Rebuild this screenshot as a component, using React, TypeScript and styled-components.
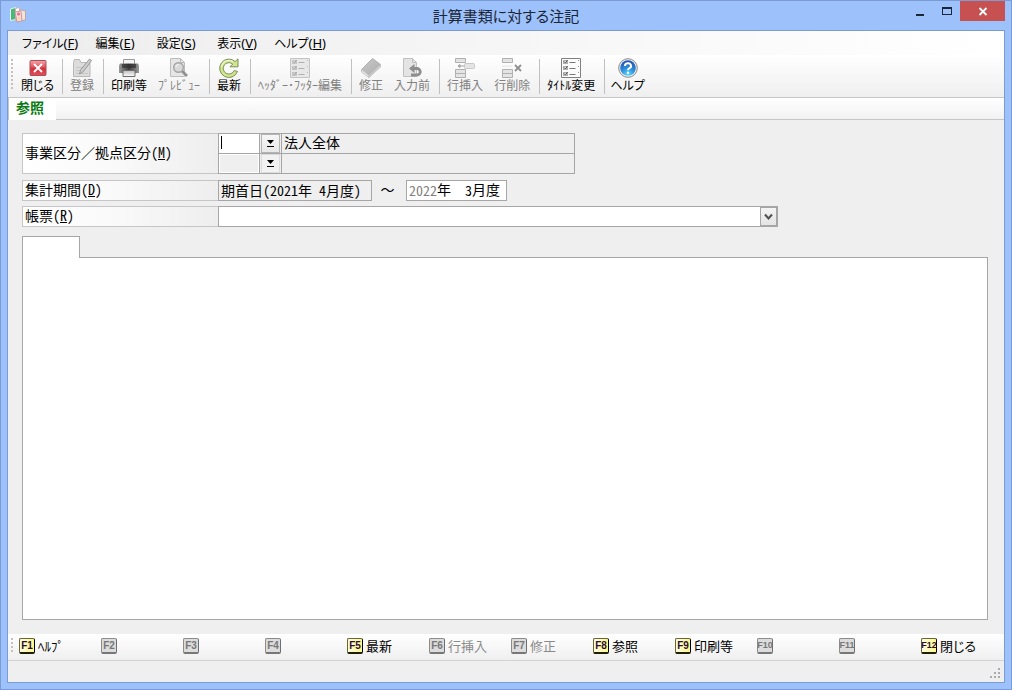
import React from "react";
import styled, { createGlobalStyle, css } from "styled-components";

const frame = "#9dc1fa";
const frameLine = "#7b9bd2";
const line = "#a6a6a6";
const softLine = "#c6c6c6";
const face = "#efefef";

const GlobalStyle = createGlobalStyle`
  * { box-sizing: border-box; }
  body { margin: 0; }
  body, button, input, select {
    font-family: "Noto Sans CJK JP", "Noto Sans", sans-serif;
    color: #000;
  }
  button, input, select { margin: 0; border-radius: 0; }
`;

const Window = styled.div`
  min-height: 100vh;
  display: flex;
  flex-direction: column;
  background: ${frame};
  border: 1px solid ${frameLine};
  padding: 0 6px 6px;
`;

const TitleBar = styled.header`
  height: 29px;
  display: grid;
  grid-template-columns: 1fr auto 1fr;
  align-items: start;
`;

const AppIcon = styled.svg`
  width: 18px;
  height: 18px;
  margin: 5px 0 0 2px;
`;

const Title = styled.h1`
  margin: 3px 0 0;
  font-size: 15px;
  line-height: 24px;
  font-weight: 400;
  font-feature-settings: "palt";
  color: #1b2638;
`;

const WindowButtons = styled.div`
  display: flex;
  justify-content: flex-end;
`;

const WindowButton = styled.button<{ $close?: boolean }>`
  width: ${(p) => (p.$close ? "45px" : "27px")};
  height: 20px;
  padding: 0;
  border: 0;
  background: ${(p) => (p.$close ? "#c75050" : "transparent")};
  svg { display: block; margin: 0 auto; }
`;

const Client = styled.div`
  flex: 1;
  display: flex;
  flex-direction: column;
  background: ${face};
  border: 1px solid ${frameLine};
`;

const MenuBar = styled.nav`
  height: 24px;
  display: flex;
  gap: 1px;
  padding-left: 8px;
  background: linear-gradient(90deg, #ededed, #fff);
`;

const MenuItem = styled.button`
  min-width: 60px;
  padding: 0 6px;
  border: 0;
  background: none;
  font-size: 12px;
  line-height: 22px;
  white-space: nowrap;
  font-feature-settings: "palt";
`;

const MenuKey = styled.span`
  font-family: "Noto Sans", sans-serif;
  font-size: 13px;
`;

const bar = css`
  display: flex;
  background: linear-gradient(#fff, #f7f7f7 50%, #efefef);
  border-bottom: 1px solid ${softLine};
`;

const ToolBar = styled.div`
  ${bar}
  height: 43px;
  padding-left: 3px;
`;

const Grip = styled.div<{ $dots: number }>`
  width: 2px;
  height: ${(p) => p.$dots * 4}px;
  margin: 4px 4px 0 0;
  background: repeating-linear-gradient(#c2c2c2 0 2px, transparent 2px 4px);
`;

const ToolGroup = styled.div`
  display: flex;
  gap: 1px;
  & + & {
    margin-left: 4px;
    padding-left: 2px;
    border-left: 1px solid #c0c0c0;
  }
  height: 35px;
  margin-top: 4px;
`;

const Tool = styled.button<{ $kana?: boolean }>`
  display: flex;
  flex-direction: column;
  align-items: center;
  min-width: ${(p) => (p.$kana ? 41 : 0)}px;
  height: 40px;
  margin-top: -1px;
  padding: 0 ${(p) => (p.$kana ? 3 : 5)}px;
  border: 0;
  background: none;
  font-size: 12px;
  line-height: 14px;
  white-space: nowrap;
  font-feature-settings: ${(p) => (p.$kana ? '"palt"' : "normal")};
  &:disabled { color: #808080; }
  svg { display: block; width: 20px; height: 20px; }
`;

const ModeBar = styled.div`
  ${bar}
  height: 22px;
  background: linear-gradient(#fff, #f2f2f2);
`;

const ModeTab = styled.button`
  width: 48px;
  height: 22px;
  padding: 0 0 4px 7px;
  border: 0;
  border-left: 1px solid ${softLine};
  background: #fff;
  color: #0a7a12;
  font-size: 14px;
  line-height: 18px;
  font-weight: 700;
  text-align: left;
`;

const Main = styled.main`
  flex: 1;
  display: flex;
  flex-direction: column;
  padding: 13px 16px 14px 14px;
  font-size: 14px;
`;

const FormRow = styled.div<{ $after: number }>`
  display: flex;
  margin-bottom: ${(p) => p.$after}px;
`;

const Label = styled.label`
  width: 196px;
  display: flex;
  align-items: center;
  padding: 0 0 2px 2px;
  border: 1px solid ${softLine};
  border-right: 0;
  background: linear-gradient(90deg, #fff, #f9f9f9 50%, #eeeeee);
  line-height: 17px;
  white-space: pre;
`;

const LabelKey = styled.span`
  font-feature-settings: "hwid";
`;

const CodeTable = styled.div`
  width: 357px;
  border: 1px solid ${line};
`;

const CodeLine = styled.div`
  display: grid;
  grid-template-columns: 41px 21px 1fr;
  grid-template-rows: 19px;
  & + & { border-top: 1px solid ${line}; }
`;

const CodeCell = styled.div`
  position: relative;
  display: flex;
  min-height: 0;
  border-right: 1px solid ${line};
`;

const Caret = styled.span`
  position: absolute;
  left: 2px;
  top: 2px;
  width: 1px;
  height: 13px;
  background: #000;
`;

const CodeInput = styled.input`
  width: 100%;
  height: 19px;
  padding: 0 2px;
  border: 0;
  outline: 0;
  background: #fff;
  font-size: 14px;
  caret-color: transparent;
  &:disabled {
    background: ${face};
    border: 1px solid #fff;
  }
`;

const PickButton = styled.button`
  width: 19px;
  height: 19px;
  margin: 0 1px;
  padding: 0;
  border: 1px solid #b4b4b4;
  background: linear-gradient(#f6f6f6, #e8e8e8);
  &:disabled { border-color: #dcdcdc; background: #f2f2f2; }
  svg { display: block; margin: 0 auto; }
`;

const CodeName = styled.output`
  padding-left: 2px;
  border-left: 1px solid ${line};
  line-height: 17px;
`;

const StartPeriod = styled.input`
  width: 154px;
  height: 21px;
  padding: 0 2px 2px;
  border: 1px solid ${line};
  background: ${face};
  font-size: 14px;
  line-height: 17px;
  font-feature-settings: "hwid";
`;

const Tilde = styled.span`
  width: 34px;
  padding-right: 3px;
  text-align: center;
  line-height: 19px;
`;

const EndPeriod = styled.div`
  width: 101px;
  height: 21px;
  display: flex;
  align-items: center;
  padding: 0 0 2px 2px;
  border: 1px solid ${line};
  background: #fff;
  line-height: 17px;
`;

const DatePart = styled.input<{ $chars: number; $dim?: boolean }>`
  width: ${(p) => p.$chars * 7}px;
  height: 17px;
  padding: 0;
  border: 0;
  background: none;
  font-size: 14px;
  text-align: right;
  font-feature-settings: "hwid";
  color: ${(p) => (p.$dim ? "#808080" : "#000")};
`;

const SelectBox = styled.div`
  position: relative;
  width: 560px;
  height: 21px;
`;

const Select = styled.select`
  appearance: none;
  width: 100%;
  height: 21px;
  border: 1px solid ${line};
  background: #fff;
  font-size: 14px;
`;

const SelectArrow = styled.span`
  position: absolute;
  right: 1px;
  top: 1px;
  width: 17px;
  height: 19px;
  border: 1px solid ${line};
  background: linear-gradient(#f4f4f4, #e4e4e4);
  pointer-events: none;
  svg { display: block; margin: 5px auto 0; }
`;

const SheetTab = styled.div`
  width: 58px;
  height: 22px;
  margin-bottom: -1px;
  z-index: 1;
  border: 1px solid ${line};
  border-bottom: 0;
  background: #fff;
`;

const Sheet = styled.section`
  flex: 1;
  border: 1px solid ${line};
  background: #fff;
`;

const KeyBar = styled.div`
  ${bar}
  height: 27px;
  padding-left: 3px;
  border-bottom-color: #d2d2d2;
`;

const KeyButton = styled.button<{ $kana?: boolean }>`
  width: 82px;
  display: flex;
  align-items: center;
  gap: 3px;
  padding: 0 0 2px 2px;
  border: 0;
  background: none;
  font-size: 13px;
  line-height: 20px;
  white-space: nowrap;
  font-feature-settings: ${(p) => (p.$kana ? '"palt"' : "normal")};
  &:disabled { color: #8a8a8a; }
`;

const KeyCap = styled.kbd<{ $on?: boolean; $small?: boolean }>`
  flex: none;
  width: 16px;
  height: 16px;
  border: 1px solid ${(p) => (p.$on ? "#66663a" : "#8c8c8c")};
  border-right-color: ${(p) => (p.$on ? "#000" : "#6e6e6e")};
  border-bottom: 2px solid ${(p) => (p.$on ? "#1e1e00" : "#777")};
  border-radius: 2px;
  background: ${(p) => (p.$on ? "linear-gradient(90deg, #fffde0, #fdf68c)" : "#dcdcdc")};
  color: ${(p) => (p.$on ? "#2a1030" : "#777")};
  font-family: "Liberation Sans Narrow", "Liberation Sans", sans-serif;
  font-size: ${(p) => (p.$small ? 9 : 10)}px;
  line-height: 13px;
  font-weight: 700;
  font-feature-settings: normal;
  display: flex;
  justify-content: center;
`;

const StatusBar = styled.footer`
  height: 21px;
  display: flex;
  justify-content: flex-end;
  align-items: flex-end;
  padding: 0 3px 3px 0;
`;

const CloseIcon = () => (
  <svg viewBox="0 0 20 20">
    <defs>
      <linearGradient id="red" x1="0" y1="0" x2="0" y2="1">
        <stop offset="0" stopColor="#f3a3a8" />
        <stop offset=".45" stopColor="#df5560" />
        <stop offset=".5" stopColor="#d3303d" />
        <stop offset="1" stopColor="#e0505a" />
      </linearGradient>
    </defs>
    <rect x="2" y="2.500" width="16" height="15" rx="1" fill="url(#red)" stroke="#a8505a" />
    <path d="M6 6l8 8M14 6l-8 8" stroke="#fff" strokeWidth="1.800" />
  </svg>
);

const RegisterIcon = () => (
  <svg viewBox="0 0 20 20" fill="#dcdcdc" stroke="#b8b8b8">
    <path d="M1.500 18.500v-14l1-3h5l1.500 3h9v14z" />
    <path d="M4 15.500h12M4 12.500h4M4 9.500h6" fill="none" stroke="#c6c6c6" />
    <path d="M7.500 16l1-4L17.500 1l2 1.500L11.500 13.500z" fill="#ccc" stroke="#999" />
  </svg>
);

const PrintIcon = () => (
  <svg viewBox="0 0 20 20">
    <defs>
      <linearGradient id="ink">
        <stop offset="0" stopColor="#9a9a9a" />
        <stop offset=".5" stopColor="#3c3c3c" />
        <stop offset="1" stopColor="#9a9a9a" />
      </linearGradient>
      <linearGradient id="tray" x1="0" y1="0" x2="0" y2="1">
        <stop offset="0" stopColor="#bdbdbd" />
        <stop offset="1" stopColor="#fff" />
      </linearGradient>
    </defs>
    <path d="M4.500 6V1.500h11V6" fill="#f4f4f4" stroke="#999" />
    <path d="M1 5.500h18l1 2v7.500H0V7.500z" fill="url(#ink)" />
    <path d="M3 6h14v4H3z" fill="#2c2c2c" opacity=".65" />
    <path d="M4 12.500h12v6H4z" fill="url(#tray)" stroke="#6e6e6e" />
  </svg>
);

const PreviewIcon = () => (
  <svg viewBox="0 0 20 20" fill="#e6e6e6" stroke="#bcbcbc">
    <path d="M1.500.5h10l4 4v14h-14z" />
    <path d="M11.500.5v4h4" fill="none" />
    <path d="M12.500 12.500l5.500 5.500" fill="none" stroke="#909090" strokeWidth="2.600" />
    <circle cx="9.500" cy="9.500" r="4.800" fill="#d9d9d9" stroke="#a4a4a4" strokeWidth="1.400" />
    <path d="M7 9a3 3 0 0 1 3-2.500" fill="none" stroke="#f6f6f6" />
  </svg>
);

const RefreshIcon = () => (
  <svg viewBox="0 0 20 20">
    <path
      d="M19 .8v8h-8l2.700-2.700A5.700 5.700 0 1 0 15.200 12.500l3.300 1A9.200 9.200 0 1 1 16.200 3.600z"
      fill="#cfe68c"
      stroke="#7d8c58"
      strokeLinejoin="round"
    />
    <path d="M14 3.700A7.400 7.400 0 0 0 2.600 9.500" fill="none" stroke="#eef7cc" strokeWidth="1.200" />
  </svg>
);

const ListIcon = ({ dim }: { dim?: boolean }) => (
  <svg viewBox="0 0 20 20" fill="none">
    <path d="M.5.500h19v19H.5z" fill={dim ? "#e8e8e8" : "#fbfbfb"} stroke={dim ? "#c4c4c4" : "#808080"} />
    {[2, 8, 14].map((y) => (
      <g key={y}>
        <rect x="2.500" y={y + 0.5} width="4" height="3" fill="#ddd" stroke={dim ? "#c4c4c4" : "#b0b0b0"} />
        <path d={`M3 ${y + 1.5}l1.500 1.500 2-3`} stroke={dim ? "#a0a0a0" : "#555"} />
        <path d={`M8.500 ${y + 2.5}h6`} stroke={dim ? "#b0b0b0" : "#777"} />
        <path d={`M17 ${y + 0.5}h1`} stroke={dim ? "#b8b8b8" : "#999"} />
      </g>
    ))}
  </svg>
);

const EraserIcon = () => (
  <svg viewBox="0 0 20 20">
    <defs>
      <linearGradient id="rubber" x1="0" y1="0" x2="1" y2="1">
        <stop offset="0" stopColor="#cacaca" />
        <stop offset="1" stopColor="#acacac" />
      </linearGradient>
    </defs>
    <path d="M11.500 .5L19.500 6.500 8 17.500 .5 11.500z" fill="url(#rubber)" stroke="#b0b0b0" />
    <path d="M.5 11.500L8 17.500v2L.5 14z" fill="#ececec" stroke="#c4c4c4" />
    <path d="M8 17.500l11.500-11V9L8 19.500z" fill="#d2d2d2" stroke="#c0c0c0" />
  </svg>
);

const RevertIcon = () => (
  <svg viewBox="0 0 20 20">
    <path d="M1.500.5h9l4 4v14h-13z" fill="#e4e4e4" stroke="#c0c0c0" />
    <path d="M10.500.5v4h4" fill="none" stroke="#c0c0c0" />
    <path d="M11 10.500h4a3 3 0 0 1 0 6.500H9" fill="none" stroke="#8e8e8e" strokeWidth="2.800" />
    <path d="M12.500 6v9L7 10.500z" fill="#8e8e8e" />
  </svg>
);

const RowIcon = ({ remove }: { remove?: boolean }) => (
  <svg viewBox="0 0 20 20" fill="#e4e4e4" stroke="#b0b0b0">
    <path d="M.5.500h10v4H.5zM.5 11.500h10v4H.5zM.5 15.500h10v4H.5z" />
    {remove ? (
      <>
        <path d="M.5 8h10" strokeDasharray="1 1" stroke="#ccc" />
        <path d="M13 7l6 6M19 7l-6 6" stroke="#909090" strokeWidth="1.800" />
      </>
    ) : (
      <>
        <rect x="9.500" y="5.500" width="10" height="5" rx="1" stroke="#c8c8c8" />
        <path d="M9 8H3M5 6.500L3 8l2 1.500z" stroke="#a0a0a0" />
      </>
    )}
  </svg>
);

const HelpIcon = () => (
  <svg viewBox="0 0 20 20">
    <defs>
      <radialGradient id="blue" cx=".5" cy=".95" r=".9">
        <stop offset="0" stopColor="#5fdcff" />
        <stop offset=".5" stopColor="#2e90dc" />
        <stop offset="1" stopColor="#2454b4" />
      </radialGradient>
    </defs>
    <circle cx="10" cy="10" r="9.300" fill="#f2f2f2" stroke="#888" />
    <circle cx="10" cy="10" r="7.800" fill="url(#blue)" />
    <path d="M7 8a3 2.700 0 1 1 4.500 2.200Q10 11 10 12.300" fill="none" stroke="#fff" strokeWidth="2" />
    <circle cx="10" cy="14.800" r="1.200" fill="#fff" />
  </svg>
);

type ToolSpec = { text: string; icon: React.ReactNode; off?: boolean; kana?: boolean };

const toolGroups: ToolSpec[][] = [
  [{ text: "閉じる", icon: <CloseIcon />, kana: true }],
  [{ text: "登録", icon: <RegisterIcon />, off: true }],
  [
    { text: "印刷等", icon: <PrintIcon /> },
    { text: "ﾌﾟﾚﾋﾞｭｰ", icon: <PreviewIcon />, off: true },
  ],
  [{ text: "最新", icon: <RefreshIcon /> }],
  [{ text: "ﾍｯﾀﾞｰ･ﾌｯﾀｰ編集", icon: <ListIcon dim />, off: true }],
  [
    { text: "修正", icon: <EraserIcon />, off: true },
    { text: "入力前", icon: <RevertIcon />, off: true },
  ],
  [
    { text: "行挿入", icon: <RowIcon />, off: true },
    { text: "行削除", icon: <RowIcon remove />, off: true },
  ],
  [{ text: "ﾀｲﾄﾙ変更", icon: <ListIcon /> }],
  [{ text: "ヘルプ", icon: <HelpIcon />, kana: true }],
];

const menus: [string, string][] = [
  ["ファイル", "F"],
  ["編集", "E"],
  ["設定", "S"],
  ["表示", "V"],
  ["ヘルプ", "H"],
];

type KeySpec = { text?: string; on?: boolean; kana?: boolean };

const keys: KeySpec[] = [
  { text: "ﾍﾙﾌﾟ", on: true },
  {},
  {},
  {},
  { text: "最新", on: true },
  { text: "行挿入" },
  { text: "修正" },
  { text: "参照", on: true },
  { text: "印刷等", on: true },
  {},
  {},
  { text: "閉じる", on: true, kana: true },
];

const PickGlyph = () => (
  <svg width="9" height="9" viewBox="0 0 9 9">
    <path d="M1 1h7L4.500 5z" />
    <path d="M1 7.500h7" stroke="#000" />
  </svg>
);

export default function App() {
  return (
    <>
      <GlobalStyle />
      <Window>
        <TitleBar>
          <AppIcon viewBox="0 0 18 18">
            <path d="M1.500 3l5-1.500v12l-5 1z" fill="#45b978" stroke="#e9efe9" />
            <path d="M6.500 2.500l4-1v12l-4 1z" fill="#fff" stroke="#c9b4b4" />
            <path d="M10.500 3.500l6 1.500v9l-6 1z" fill="#f3e3da" stroke="#b9a6a6" />
            <path d="M6 6l6-1 1 10-5 1z" fill="#fbd9d9" stroke="#c99a9a" />
            <circle cx="9.500" cy="8" r="1.600" fill="#ea6a94" />
            <path d="M9 11l3 1-2 2z" fill="#f2d48a" />
          </AppIcon>
          <Title>計算書類に対する注記</Title>
          <WindowButtons>
            <WindowButton aria-label="最小化">
              <svg width="10" height="18" viewBox="0 0 10 18">
                <path d="M1 12h8v2H1z" fill="#1b2638" />
              </svg>
            </WindowButton>
            <WindowButton aria-label="最大化">
              <svg width="10" height="20" viewBox="0 0 10 20">
                <path d="M0 6h10v8H0zM1 8v5h8V8z" fill="#1b2638" fillRule="evenodd" />
              </svg>
            </WindowButton>
            <WindowButton $close aria-label="閉じる">
              <svg width="10" height="20" viewBox="0 0 10 20">
                <path d="M1.500 7l7 7M8.500 7l-7 7" stroke="#fff" strokeWidth="1.800" />
              </svg>
            </WindowButton>
          </WindowButtons>
        </TitleBar>
        <Client>
          <MenuBar>
            {menus.map(([name, key]) => (
              <MenuItem key={key}>
                {name}
                <MenuKey>
                  (<u>{key}</u>)
                </MenuKey>
              </MenuItem>
            ))}
          </MenuBar>
          <ToolBar>
            <Grip $dots={8} />
            {toolGroups.map((group, i) => (
              <ToolGroup key={i}>
                {group.map((tool) => (
                  <Tool key={tool.text} disabled={tool.off} $kana={tool.kana}>
                    {tool.icon}
                    {tool.text}
                  </Tool>
                ))}
              </ToolGroup>
            ))}
          </ToolBar>
          <ModeBar>
            <ModeTab>参照</ModeTab>
          </ModeBar>
          <Main>
            <FormRow $after={6}>
              <Label htmlFor="division">
                事業区分／拠点区分
                <LabelKey>
                  (<u>M</u>)
                </LabelKey>
              </Label>
              <CodeTable>
                <CodeLine>
                  <CodeCell>
                    <CodeInput id="division" />
                    <Caret />
                  </CodeCell>
                  <PickButton aria-label="事業区分の選択">
                    <PickGlyph />
                  </PickButton>
                  <CodeName>法人全体</CodeName>
                </CodeLine>
                <CodeLine>
                  <CodeCell>
                    <CodeInput aria-label="拠点区分" disabled />
                  </CodeCell>
                  <PickButton aria-label="拠点区分の選択" disabled>
                    <PickGlyph />
                  </PickButton>
                  <CodeName />
                </CodeLine>
              </CodeTable>
            </FormRow>
            <FormRow $after={5}>
              <Label htmlFor="period">
                集計期間
                <LabelKey>
                  (<u>D</u>)
                </LabelKey>
              </Label>
              <StartPeriod id="period" readOnly value="期首日(2021年 4月度)" />
              <Tilde>～</Tilde>
              <EndPeriod>
                <DatePart aria-label="年" $chars={4} $dim defaultValue="2022" />
                年
                <DatePart aria-label="月" $chars={3} defaultValue="3" />
                月度
              </EndPeriod>
            </FormRow>
            <FormRow $after={9}>
              <Label htmlFor="report">
                帳票
                <LabelKey>
                  (<u>R</u>)
                </LabelKey>
              </Label>
              <SelectBox>
                <Select id="report">
                  <option></option>
                </Select>
                <SelectArrow>
                  <svg width="9" height="8" viewBox="0 0 9 8">
                    <path d="M1 1.500l3.500 4 3.500-4" fill="none" stroke="#505050" strokeWidth="2" />
                  </svg>
                </SelectArrow>
              </SelectBox>
            </FormRow>
            <SheetTab />
            <Sheet />
          </Main>
          <KeyBar>
            <Grip $dots={4} />
            {keys.map((key, i) => (
              <KeyButton key={i} disabled={!key.on} $kana={key.kana}>
                <KeyCap $on={key.on} $small={i > 8}>
                  F{i + 1}
                </KeyCap>
                {key.text}
              </KeyButton>
            ))}
          </KeyBar>
          <StatusBar>
            <svg width="11" height="11" viewBox="0 0 11 11" fill="#ababab">
              <path d="M8 0h2v2H8zM4 4h2v2H4zM8 4h2v2H8zM0 8h2v2H0zM4 8h2v2H4zM8 8h2v2H8z" />
            </svg>
          </StatusBar>
        </Client>
      </Window>
    </>
  );
}
